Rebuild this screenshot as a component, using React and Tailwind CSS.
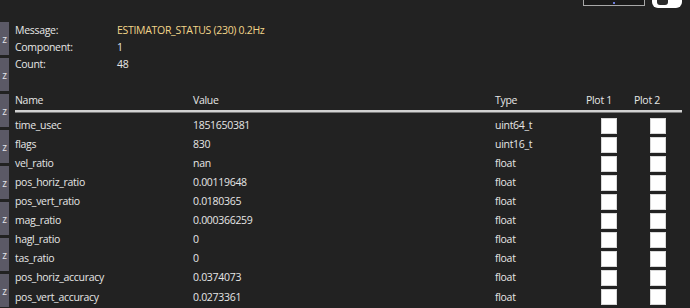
const fields = [
  ["time_usec", "1851650381", "uint64_t"],
  ["flags", "830", "uint16_t"],
  ["vel_ratio", "nan", "float"],
  ["pos_horiz_ratio", "0.00119648", "float"],
  ["pos_vert_ratio", "0.0180365", "float"],
  ["mag_ratio", "0.000366259", "float"],
  ["hagl_ratio", "0", "float"],
  ["tas_ratio", "0", "float"],
  ["pos_horiz_accuracy", "0.0374073", "float"],
  ["pos_vert_accuracy", "0.0273361", "float"],
]

function ZButton() {
  return (
    <div className="h-[33px] w-[9px] bg-[#5b5966] flex items-center justify-center text-[10px] leading-none text-[#e4e4ea] shrink-0">
      z
    </div>
  )
}

function Box() {
  return <div className="w-[16px] h-[16px] bg-white border border-[#d8d8d8]" />
}

export default function App() {
  return (
    <div
      className="w-[690px] h-[308px] bg-[#222222] overflow-hidden flex text-[10.5px] tracking-[-0.3px] text-[#e6e6e6]"
      style={{ fontFamily: '"Open Sans", "Noto Sans", sans-serif' }}
    >
      <div className="flex flex-col gap-[3px] pt-[22px] w-[9px] shrink-0 tracking-normal">
        {Array.from({ length: 8 }).map((_, i) => (
          <ZButton key={i} />
        ))}
      </div>

      <div className="flex-1 flex flex-col pl-[6px]">
        <div className="h-[8px] flex justify-end items-end gap-[7px] pr-[8px] overflow-hidden">
          <div className="w-[62px] h-[20px] mb-[2px] bg-[#1a1a1a] border border-[#a8a8a8] flex items-end justify-center pb-[1px]">
            <div className="w-[2px] h-[2px] bg-[#6a7ad8]" />
          </div>
          <div className="w-[30px] h-[20px] bg-white rounded-[6px] flex items-end pl-[5px] pb-[3px]">
            <div className="w-[11px] h-[12px] bg-[#2a2a2a] rounded-[3px]" />
          </div>
        </div>

        <div className="pt-[14px] grid grid-cols-[102px_1fr] leading-[17px]">
          <div>Message:</div>
          <div className="text-[#f3d68a]">ESTIMATOR_STATUS (230) 0.2Hz</div>
          <div>Component:</div>
          <div>1</div>
          <div>Count:</div>
          <div>48</div>
        </div>

        <div className="mt-[18px] pr-[8px]">
          <div className="flex h-[19px] items-center">
            <div className="w-[178px]">Name</div>
            <div className="w-[302px]">Value</div>
            <div className="w-[86px]">Type</div>
            <div className="w-[49px] pl-[5px]">Plot 1</div>
            <div className="pl-[4px]">Plot 2</div>
          </div>
          <div className="h-[3px] bg-[#d2d2d2] border-b border-[#7a7a7a]" />
          <div className="pt-[3px]">
            {fields.map(([n, v, t]) => (
              <div key={n} className="flex h-[19.1px] items-center">
                <div className="w-[178px]">{n}</div>
                <div className="w-[302px]">{v}</div>
                <div className="w-[86px]">{t}</div>
                <div className="w-[49px] pl-[20px]">
                  <Box />
                </div>
                <div className="pl-[20px]">
                  <Box />
                </div>
              </div>
            ))}
          </div>
        </div>
      </div>
    </div>
  )
}
